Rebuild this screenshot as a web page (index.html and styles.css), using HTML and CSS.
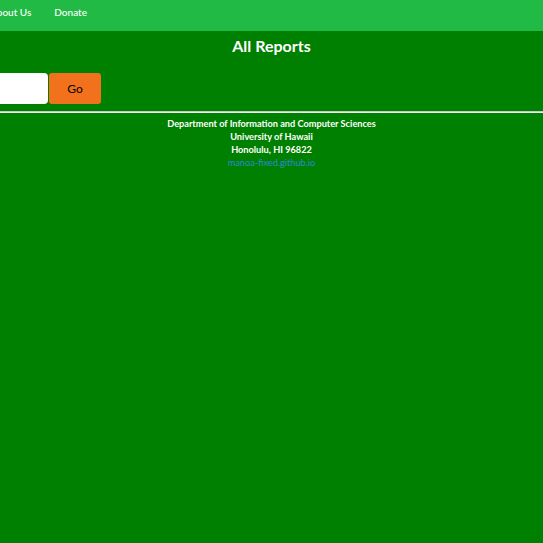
FILE: index.html
```html
<!DOCTYPE html>
<html>
<head>
<meta charset="utf-8">
<link rel="stylesheet" href="styles.css">
</head>
<body>
<nav class="topbar">
  <a class="nav-item about">About Us</a>
  <a class="nav-item">Donate</a>
</nav>
<main class="content">
  <h1 class="title">All Reports</h1>
  <form class="search">
    <input class="search-input" type="text">
    <button class="go" type="button">Go</button>
  </form>
</main>
<footer class="footer">
  <div>Department of Information and Computer Sciences</div>
  <div>University of Hawaii</div>
  <div>Honolulu, HI 96822</div>
  <a class="footer-link">manoa-fixed.github.io</a>
</footer>
</body>
</html>
```
FILE: styles.css
```css
html, body {
  margin: 0;
  padding: 0;
  background: #008000;
  font-family: Lato, "Noto Sans", sans-serif;
  overflow: hidden;
}
.topbar {
  height: 31px;
  background: #21ba45;
  display: flex;
  align-items: center;
  gap: 23px;
  margin-left: -10px;
}
.nav-item {
  color: #ffffff;
  font-size: 10px;
  font-weight: 500;
  line-height: 1;
  margin-top: -7px;
}
.content {
  display: flex;
  flex-direction: column;
  align-items: center;
}
.title {
  margin: 6px 0 0;
  font-size: 16px;
  font-weight: bold;
  color: #ffffff;
  line-height: 18px;
}
.search {
  align-self: flex-start;
  display: flex;
  gap: 1px;
  margin-top: 18px;
}
.search-input {
  width: 48px;
  height: 31px;
  box-sizing: border-box;
  border: none;
  border-radius: 0 4px 4px 0;
  background: #fff;
  padding: 0;
}
.go {
  width: 52px;
  height: 31px;
  border: none;
  border-radius: 3px;
  background: #f2711c;
  color: #000;
  font-family: Lato, sans-serif;
  font-size: 12px;
  padding: 0;
}
.footer {
  margin-top: 7px;
  border-top: 1px solid #c8c8c8;
  box-shadow: inset 0 1px 0 #f0f0f0;
  padding-top: 5px;
  text-align: center;
  color: #fff;
  font-size: 9.2px;
  font-weight: bold;
  line-height: 13px;
}
.footer-link {
  color: #2d8ad6;
  font-weight: normal;
}
```
